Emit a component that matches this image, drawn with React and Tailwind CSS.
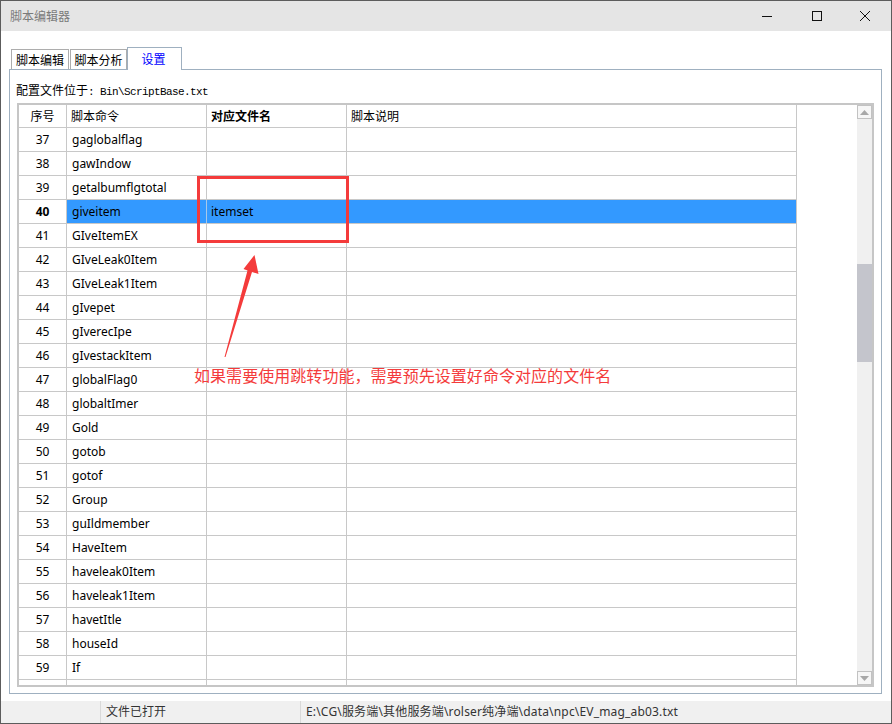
import React from 'react';

const rows = [
  [37, 'gaglobalflag', ''],
  [38, 'gawIndow', ''],
  [39, 'getalbumflgtotal', ''],
  [40, 'giveitem', 'itemset'],
  [41, 'GIveItemEX', ''],
  [42, 'GIveLeak0Item', ''],
  [43, 'GIveLeak1Item', ''],
  [44, 'gIvepet', ''],
  [45, 'gIverecIpe', ''],
  [46, 'gIvestackItem', ''],
  [47, 'globalFlag0', ''],
  [48, 'globaltImer', ''],
  [49, 'Gold', ''],
  [50, 'gotob', ''],
  [51, 'gotof', ''],
  [52, 'Group', ''],
  [53, 'guIldmember', ''],
  [54, 'HaveItem', ''],
  [55, 'haveleak0Item', ''],
  [56, 'haveleak1Item', ''],
  [57, 'havetItle', ''],
  [58, 'houseId', ''],
  [59, 'If', ''],
  ['', '', ''],
];

const font = { fontFamily: '"Noto Sans","Noto Sans CJK SC",sans-serif' };

function Row({ n, cmd, file }) {
  const sel = n === 40;
  return (
    <div className="flex h-[24px] w-[778px] border-b border-[#c8c8c8] text-[12px] leading-[23px] text-black">
      <div className={`w-[48px] shrink-0 border-r border-[#c8c8c8] text-center ${sel ? 'font-bold' : ''}`}>{n}</div>
      <div className={`w-[140px] shrink-0 border-r pl-[5px] ${sel ? 'bg-[#3399ff] border-[#a8c8e8]' : 'border-[#c8c8c8]'}`}>{cmd}</div>
      <div className={`w-[140px] shrink-0 border-r pl-[4px] ${sel ? 'bg-[#3399ff] border-[#a8c8e8]' : 'border-[#c8c8c8]'}`}>{file}</div>
      <div className={`w-[450px] shrink-0 border-r border-[#c8c8c8] ${sel ? 'bg-[#3399ff]' : ''}`}></div>
    </div>
  );
}

export default function App() {
  return (
    <div className="relative flex h-[724px] w-[892px] flex-col overflow-hidden border border-[#5c5c5c] bg-white" style={font}>
      {/* title bar */}
      <div className="relative flex h-[30px] shrink-0 items-center bg-[#e5e5e5] pl-[9px] text-[12px] text-[#7a7a7a]">
        <span style={{ fontFamily: '"Noto Sans CJK SC",sans-serif' }}>脚本编辑器</span>
        <div className="absolute right-0 top-0 flex h-[30px]">
          <div className="flex w-[50px] items-center justify-center">
            <svg width="10" height="10" viewBox="0 0 10 10"><path d="M0 5.5H10" stroke="#111" strokeWidth="1" /></svg>
          </div>
          <div className="flex w-[50px] items-center justify-center">
            <svg width="10" height="10" viewBox="0 0 10 10"><rect x="0.5" y="0.5" width="9" height="9" fill="none" stroke="#111" strokeWidth="1" /></svg>
          </div>
          <div className="flex w-[49px] items-center justify-center pr-[3px]">
            <svg width="10" height="10" viewBox="0 0 10 10"><path d="M0 0L10 10M10 0L0 10" stroke="#111" strokeWidth="1" /></svg>
          </div>
        </div>
      </div>

      {/* body */}
      <div className="flex flex-1 flex-col pl-[8px] pr-[9px] pt-[16px] pb-[7px]">
        {/* tabs */}
        <div className="flex h-[22px] items-end pl-[2px] text-[12px]" style={{ fontFamily: '"Noto Sans CJK SC",sans-serif' }}>
          <div className="flex h-[20px] w-[58px] items-center justify-center border border-b-0 border-[#adadad] bg-white text-black">脚本编辑</div>
          <div className="ml-[1px] flex h-[20px] w-[57px] items-center justify-center border border-b-0 border-[#adadad] bg-white text-black">脚本分析</div>
          <div className="relative z-10 -mb-px flex h-[23px] w-[55px] items-center justify-center border border-b-0 border-[#9fb0c0] bg-white pb-[1px] pr-[2px] text-[#0000ff]">设置</div>
        </div>

        {/* panel */}
        <div className="flex h-[625px] flex-col border border-[#9fb0c0] pl-[7px]">
          <div className="h-[33px] pt-[12px] text-[12px] leading-[16px] text-black">
            <span className="ml-[-1px]" style={{ fontFamily: '"Noto Sans CJK SC",sans-serif' }}>配置文件位于</span>
            <span className="tracking-[-0.6px] text-[11px]" style={{ fontFamily: '"Liberation Mono",monospace' }}>{': Bin\\ScriptBase.txt'}</span>
          </div>

          {/* table */}
          <div className="flex h-[584px] w-[857px] border-2 border-[#c6c6c6]">
            <div className="flex-1 overflow-hidden">
              <div className="flex h-[23px] w-[778px] border-b border-[#c8c8c8] text-[12px] leading-[21px] text-black" style={{ fontFamily: '"Noto Sans CJK SC",sans-serif' }}>
                <div className="w-[48px] shrink-0 border-r border-[#c8c8c8] text-center">序号</div>
                <div className="w-[140px] shrink-0 border-r border-[#c8c8c8] pl-[4px]">脚本命令</div>
                <div className="w-[140px] shrink-0 border-r border-[#c8c8c8] pl-[4px] font-bold">对应文件名</div>
                <div className="w-[450px] shrink-0 border-r border-[#c8c8c8] pl-[4px]">脚本说明</div>
              </div>
              {rows.map((r, i) => (
                <Row key={i} n={r[0]} cmd={r[1]} file={r[2]} />
              ))}
            </div>
            {/* scrollbar */}
            <div className="flex w-[15px] shrink-0 flex-col bg-[#f0f0f0]">
              <div className="flex h-[14px] items-center justify-center border border-[#c2c2c2] bg-[#f6f6f6]">
                <svg width="9" height="5" viewBox="0 0 9 5"><path d="M4.5 0L9 5H0Z" fill="#a8a8a8" /></svg>
              </div>
              <div className="h-[145px]"></div>
              <div className="h-[98px] bg-[#c4c5cc]"></div>
              <div className="flex-1"></div>
              <div className="flex h-[14px] items-center justify-center border border-[#c2c2c2] bg-[#f6f6f6]">
                <svg width="9" height="5" viewBox="0 0 9 5"><path d="M0 0H9L4.5 5Z" fill="#a8a8a8" /></svg>
              </div>
            </div>
          </div>
        </div>
      </div>

      {/* status bar */}
      <div className="flex h-[22px] shrink-0 items-center bg-[#f0f0f0] text-[12px] text-[#333]" style={{ fontFamily: '"Noto Sans","Noto Sans CJK SC",sans-serif' }}>
        <div className="h-full w-[99px]"></div>
        <div className="flex h-full w-[200px] items-center border-l border-[#d9d9d9] pl-[5px]">文件已打开</div>
        <div className="flex h-full flex-1 items-center border-l border-[#d9d9d9] pl-[5px] tracking-[0.17px]">{'E:\\CG\\服务端\\其他服务端\\rolser纯净端\\data\\npc\\EV_mag_ab03.txt'}</div>
      </div>

      {/* annotations */}
      <div className="pointer-events-none absolute left-[196px] top-[175px] h-[67px] w-[152px] border-[3px] border-[#f43b3b]"></div>
      <svg className="pointer-events-none absolute left-0 top-0" width="892" height="724" viewBox="0 0 892 724">
        <polygon points="253.5,254 257.5,273 251,271 224.5,356 223.5,356 246.5,269.5 242.5,268" fill="#f43b3b" />
      </svg>
      <div className="pointer-events-none absolute left-[193px] top-[364px] whitespace-nowrap text-[16px] leading-[20px] tracking-[0.05px] text-[#f43b3b]" style={{ fontFamily: '"Noto Sans CJK SC",sans-serif' }}>
        如果需要使用跳转功能，需要预先设置好命令对应的文件名
      </div>
    </div>
  );
}
